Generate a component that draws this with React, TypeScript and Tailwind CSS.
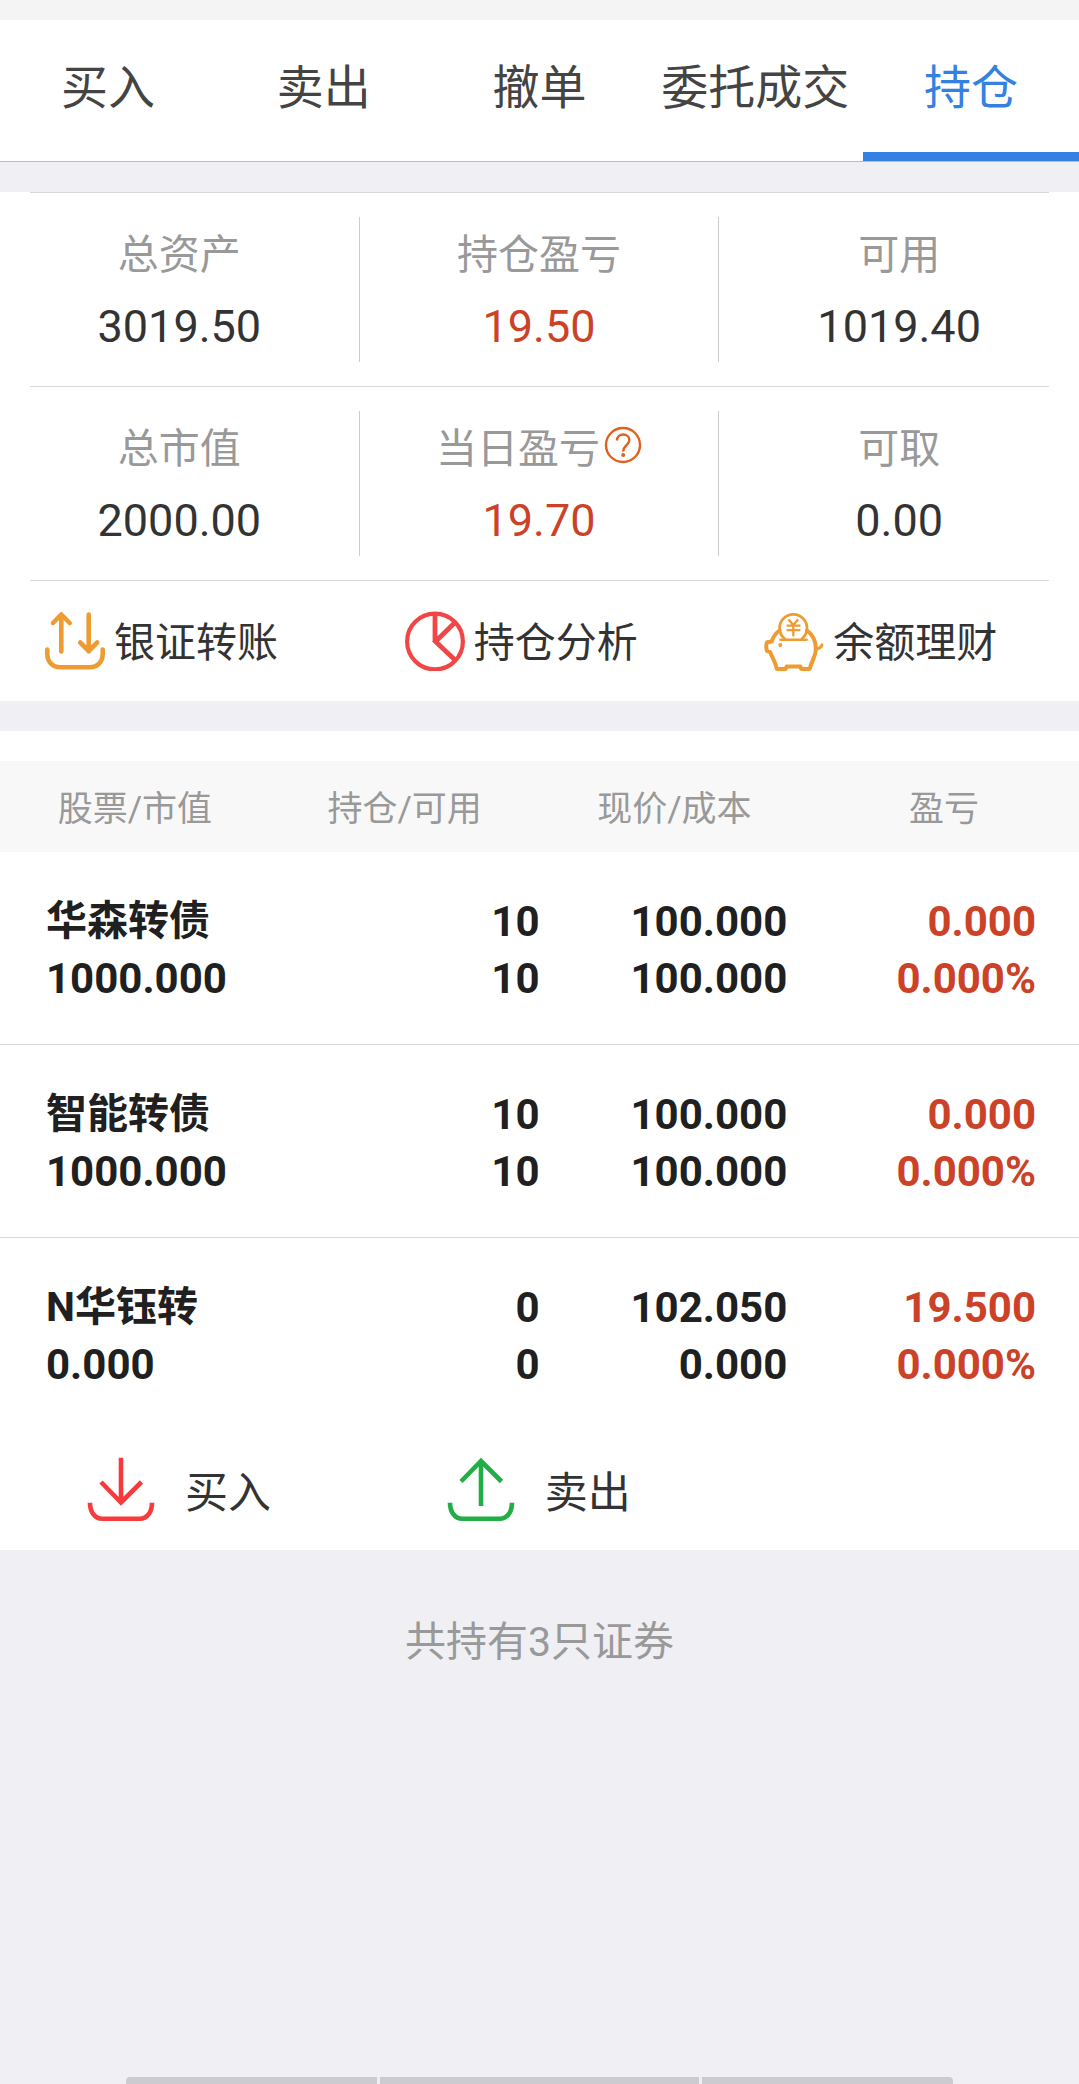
import type { ReactNode } from 'react'

interface Figure {
	label: string
	value: string
	up?: boolean
	hint?: boolean
}

interface Holding {
	name: string
	marketValue: string
	amount: string
	available: string
	price: string
	cost: string
	profit: string
	profitRate: string
}

const tabs = ['买入', '卖出', '撤单', '委托成交', '持仓']

const figures: Figure[][] = [
	[
		{ label: '总资产', value: '3019.50' },
		{ label: '持仓盈亏', value: '19.50', up: true },
		{ label: '可用', value: '1019.40' },
	],
	[
		{ label: '总市值', value: '2000.00' },
		{ label: '当日盈亏', value: '19.70', up: true, hint: true },
		{ label: '可取', value: '0.00' },
	],
]

const holdings: Holding[] = [
	{ name: '华森转债', marketValue: '1000.000', amount: '10', available: '10', price: '100.000', cost: '100.000', profit: '0.000', profitRate: '0.000%' },
	{ name: '智能转债', marketValue: '1000.000', amount: '10', available: '10', price: '100.000', cost: '100.000', profit: '0.000', profitRate: '0.000%' },
	{ name: 'N华钰转', marketValue: '0.000', amount: '0', available: '0', price: '102.050', cost: '0.000', profit: '19.500', profitRate: '0.000%' },
]

const TransferIcon = () => (
	<svg width="60" height="60" viewBox="0 0 60 60" fill="none" stroke="#ee9b32" strokeWidth="4.6" strokeLinecap="round" strokeLinejoin="round">
		<path d="M16.3 40.5V3.5M8 12l8.3-8.5L24.7 12" />
		<path d="M43.7 3.5v37M35.2 31.5l8.5 8.5 8.5-8.5" />
		<path d="M2.3 38.5V43c0 8 5.500 13.300 13 13.300h29.400c7.500 0 13-5.300 13-13.300v-4.500" />
	</svg>
)

const PieIcon = () => (
	<svg width="60" height="60" viewBox="0 0 60 60" fill="none" stroke="#f24646" strokeWidth="4.2">
		<circle cx="30" cy="30.5" r="27.900" />
		<path d="M49.500 12L30.500 30.500l19 18M30 2v29" strokeWidth="4.800" />
	</svg>
)

const PiggyIcon = () => (
	<svg width="60" height="60" viewBox="0 0 60 60" fill="none" stroke="#ee9b32" strokeLinecap="round" strokeLinejoin="round">
		<path d="M20.500 27.500a13.700 13.700 0 1 1 17.600 0" strokeWidth="2.800" />
		<path d="M16.500 28.700h26" strokeWidth="2.600" />
		<path d="M25 9l4.300 5L33.600 9M23.500 14.700h12M23.500 19.200h12M29.300 14v10.500" strokeWidth="2.300" />
		<path
			d="M15.500 19.500C11.500 22.500 9 26 7.800 30.500l-4.800.8c-.9 2.700-.9 6 0 8.700l3.200 1.200c1.600 5.200 5.300 8.800 6.600 16.800h9l.8-2.500h13.800l.8 2.500h8.500C46.800 52 51.500 46 51.800 38.500c.4-8-2.800-14.500-8.800-19"
			strokeWidth="4"
		/>
		<path d="M52 37.500c3.300.2 5.400-1.200 6-3.600" strokeWidth="3" />
		<circle cx="16.300" cy="34" r="2" fill="#ee9b32" stroke="none" />
	</svg>
)

const HintIcon = () => (
	<svg width="38" height="38" viewBox="0 0 38 38" fill="none" stroke="#e06020" strokeWidth="2.4">
		<circle cx="19" cy="19" r="17" />
		<path d="M13 14.500c0-3.800 2.600-6 6.200-6s6.200 2.300 6.200 5.500c0 5-6.200 5.200-6.200 11.500" />
		<circle cx="19.200" cy="29" r="2" fill="#e06020" stroke="none" />
	</svg>
)

const BuyIcon = () => (
	<svg width="68" height="66" viewBox="0 0 68 66" fill="none" stroke="#f83a3c" strokeWidth="4.600">
		<path d="M34 .7v46M14 25l20 20.500L54.500 25" />
		<path d="M3 45.700c0 9 4.500 16 12.500 16h37c8 0 12.500-7 12.500-16" />
	</svg>
)

const SellIcon = () => (
	<svg width="68" height="66" viewBox="0 0 68 66" fill="none" stroke="#20ae45" strokeWidth="4.600">
		<path d="M34 49V4M14 24.500L34 4l20.500 20.500" />
		<path d="M3 45.700c0 9 4.500 16 12.500 16h37c8 0 12.500-7 12.500-16" />
	</svg>
)

const FigureRow = ({ items }: { items: Figure[] }) => (
	<dl className="grid grid-cols-3 py-6 text-center divide-x divide-[#cccccc]">
		{items.map((item) => (
			<div key={item.label} className="pt-[2px]">
				<dt className="flex items-center justify-center gap-1 text-[41px] leading-[72px] text-[#999999]">
					{item.label}
					{item.hint && (
						<button type="button" aria-label="说明" className="mb-2">
							<HintIcon />
						</button>
					)}
				</dt>
				<dd className={`text-[45px] leading-[71px] ${item.up ? 'text-[#cb4228]' : 'text-[#333333]'}`}>{item.value}</dd>
			</div>
		))}
	</dl>
)

const Shortcut = ({ icon, label }: { icon: ReactNode; label: string }) => (
	<button type="button" className="flex items-center gap-[9px] h-[120px] pl-[45px] text-[41px] text-[#333333]">
		{icon}
		<span className="pt-1.5">{label}</span>
	</button>
)

const TradeButton = ({ icon, label }: { icon: ReactNode; label: string }) => (
	<button type="button" className="flex items-center gap-[30px] h-[120px] pl-[87px] text-[43px] text-[#333333]">
		{icon}
		<span className="pt-1.5">{label}</span>
	</button>
)

const App = () => {
	return (
		<div className="flex flex-col min-h-screen bg-[#efeff4] [font-family:Roboto,'Noto_Sans_CJK_SC',sans-serif]">
			<div className="h-5 bg-[#f4f4f4]" />
			<nav className="flex bg-white border-b border-[#bcbcc0]">
				{tabs.map((tab) => (
					<button
						key={tab}
						type="button"
						className={`flex-1 pt-1 border-b-[9px] text-[47px] leading-[128px] whitespace-nowrap ${
							tab === '持仓' ? 'border-[#3481e1] text-[#3481e1]' : 'border-transparent text-[#444444]'
						}`}
					>
						{tab}
					</button>
				))}
			</nav>

			<section className="mt-[30px] bg-white">
				<hr className="mx-[30px] border-[#d9d9d9]" />
				<FigureRow items={figures[0]} />
				<hr className="mx-[30px] border-[#d9d9d9]" />
				<FigureRow items={figures[1]} />
				<hr className="mx-[30px] border-[#d9d9d9]" />
				<div className="grid grid-cols-3">
					<Shortcut icon={<TransferIcon />} label="银证转账" />
					<Shortcut icon={<PieIcon />} label="持仓分析" />
					<Shortcut icon={<PiggyIcon />} label="余额理财" />
				</div>
			</section>

			<section className="mt-[30px] pt-[30px] bg-white">
				<table className="w-full table-fixed">
					<thead className="bg-[#f8f8f8] text-[35px] leading-[85px] text-[#999999]">
						<tr>
							<th className="pt-1.5 font-normal">股票/市值</th>
							<th className="pt-1.5 font-normal">持仓/可用</th>
							<th className="pt-1.5 font-normal">现价/成本</th>
							<th className="pt-1.5 font-normal">盈亏</th>
						</tr>
					</thead>
					<tbody className="divide-y divide-[#d9d9d9] text-[42px] leading-[57px] font-bold text-right text-[#202020]">
						{holdings.map((item) => (
							<tr key={item.name}>
								<td className="pt-[41px] pb-[37px] pl-[46px] text-left">
									<div className="text-[41px]">{item.name}</div>
									<div>{item.marketValue}</div>
								</td>
								<td className="pt-[41px] pb-[37px]">
									<div>{item.amount}</div>
									<div>{item.available}</div>
								</td>
								<td className="pt-[41px] pb-[37px] pr-[22px]">
									<div>{item.price}</div>
									<div>{item.cost}</div>
								</td>
								<td className="pt-[41px] pb-[37px] pr-[43px] text-[#cb4228]">
									<div>{item.profit}</div>
									<div>{item.profitRate}</div>
								</td>
							</tr>
						))}
					</tbody>
				</table>
				<div className="grid grid-cols-3">
					<TradeButton icon={<BuyIcon />} label="买入" />
					<TradeButton icon={<SellIcon />} label="卖出" />
				</div>
			</section>

			<p className="pt-[62px] text-center text-[41px] leading-[60px] text-[#999999]">共持有3只证券</p>

			{/* top edge of the bottom switcher */}
			<div className="grid grid-cols-[251fr_320fr_251fr] gap-[3px] h-[7px] mt-auto mx-[126px]">
				<div className="rounded-tl bg-[#cbcbd0]" />
				<div className="bg-[#cbcbd0]" />
				<div className="rounded-tr bg-[#cbcbd0]" />
			</div>
		</div>
	)
}

export default App
